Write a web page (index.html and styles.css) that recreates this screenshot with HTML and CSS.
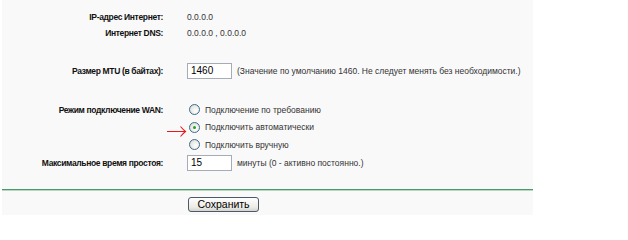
FILE: index.html
```html
<!DOCTYPE html>
<html lang="ru">
<head>
<meta charset="utf-8">
<title>WAN</title>
<link rel="stylesheet" href="styles.css">
</head>
<body>
<div class="panel">
  <div class="row r1">
    <div class="label">IP-адрес Интернет:</div>
    <div class="value">0.0.0.0</div>
  </div>
  <div class="row r2">
    <div class="label">Интернет DNS:</div>
    <div class="value">0.0.0.0 , 0.0.0.0</div>
  </div>
  <div class="row r3">
    <div class="label">Размер MTU (в байтах):</div>
    <div class="value"><span class="field">1460</span><span class="note">(Значение по умолчанию 1460. Не следует менять без необходимости.)</span></div>
  </div>
  <div class="row r4">
    <div class="label">Режим подключение WAN:</div>
    <div class="value"><span class="radio"></span><span>Подключение по требованию</span></div>
  </div>
  <div class="row r5">
    <div class="label"></div>
    <div class="value opt">
      <svg class="arrow" width="20" height="12" viewBox="0 0 20 12"><path d="M0 6.5H18.5M13.5 1.5Q16 4.5 18.5 6.5Q16 8.5 13.5 11.5" fill="none" stroke="#e8191e" stroke-width="1.1"/></svg>
      <span class="radio checked"></span><span>Подключить автоматически</span>
    </div>
  </div>
  <div class="row r6">
    <div class="label"></div>
    <div class="value"><span class="radio"></span><span>Подключить вручную</span></div>
  </div>
  <div class="row r7">
    <div class="label">Максимальное время простоя:</div>
    <div class="value"><span class="field">15</span><span class="note2">минуты (0 - активно постоянно.)</span></div>
  </div>
  <div class="rule"></div>
  <div class="row r8">
    <div class="label"></div>
    <div class="value"><span class="button">Сохранить</span></div>
  </div>
</div>
</body>
</html>
```
FILE: styles.css
```css
html, body {
  margin: 0;
  padding: 0;
  background: #ffffff;
}
body {
  font-family: "Liberation Sans", Arial, sans-serif;
  font-size: 8.5px;
  color: #333333;
}
.panel {
  margin-left: 2px;
  width: 531px;
  height: 215px;
  background: #f9f9f9;
  padding-top: 9px;
  box-sizing: border-box;
}
.row {
  display: grid;
  grid-template-columns: 161px 1fr;
  column-gap: 24px;
  align-items: center;
}
.label {
  text-align: right;
  font-weight: bold;
  color: #111111;
  white-space: nowrap;
  letter-spacing: -0.35px;
}
.value {
  display: flex;
  align-items: center;
  white-space: nowrap;
}
.r1 { height: 16px; }
.r2 { height: 16px; }
.r3 { height: 16px; margin-top: 22px; }
.r4 { height: 17px; margin-top: 22px; }
.r5 { height: 18px; }
.r6 { height: 17px; }
.r7 { height: 19px; }
.r8 { height: 16px; margin-top: 5px; }
.field {
  box-sizing: border-box;
  width: 45px;
  height: 16px;
  border: 1px solid #a5acb5;
  background: #ffffff;
  color: #000000;
  font-size: 10px;
  line-height: 14px;
  padding-left: 3px;
  margin-right: 4px;
}
.note { margin-left: 1px; }
.note2 { margin-left: 1px; }
.opt { position: relative; }
.arrow {
  position: absolute;
  left: -20px;
  top: 3px;
}
.radio {
  box-sizing: border-box;
  width: 11px;
  height: 11px;
  border-radius: 50%;
  border: 1px solid #3e6a8e;
  background: radial-gradient(circle at 65% 65%, #ffffff 0%, #e8e8e2 60%, #d4d4cc 100%);
  margin-left: 2px;
  margin-right: 5px;
  position: relative;
}
.radio.checked::after {
  content: "";
  position: absolute;
  left: 3px;
  top: 3px;
  width: 3px;
  height: 3px;
  border-radius: 50%;
  background: #21a121;
}
.rule {
  margin-top: 17px;
  height: 1px;
  border-top: 1px solid #4c9a6a;
  background: #b7d7c2;
}
.button {
  box-sizing: border-box;
  width: 71px;
  height: 15px;
  border: 1px solid #4a5a6c;
  border-radius: 3px;
  background: linear-gradient(#fefefe, #ecebe6 70%, #d6d3ca);
  color: #000000;
  font-size: 10.5px;
  line-height: 13px;
  text-align: center;
  margin-left: 1px;
}
```
